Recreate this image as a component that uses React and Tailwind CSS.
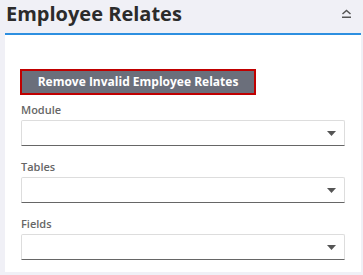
export default function App() {
  const Field = ({ label }) => (
    <div className="flex flex-col">
      <div className="text-[11px] font-semibold text-[#666] leading-[14px] mb-[3px]">{label}</div>
      <div className="h-[26px] border border-[#ddd] border-b-[#666] rounded-t-[2px] bg-white flex items-center justify-end pr-[8px]">
        <svg width="9" height="5" viewBox="0 0 9 5"><path d="M0 0h9L4.5 5z" fill="#555" /></svg>
      </div>
    </div>
  );
  return (
    <div className="w-[363px] h-[275px] bg-[#f0f0f6] overflow-hidden" style={{ fontFamily: '"Open Sans", sans-serif' }}>
      <div className="h-[33px] flex items-center justify-between pl-[6px] pr-[11px]">
        <div className="text-[20px] font-bold text-[#2b2b2b] leading-none -mt-[6px]">Employee Relates</div>
        <svg width="11" height="10" viewBox="0 0 11 10" className="-mt-[6px]">
          <path d="M1.5 5L5.5 1.5L9.5 5" stroke="#555" strokeWidth="1.5" fill="none" />
          <rect x="1" y="7.5" width="9" height="1.5" fill="#555" />
        </svg>
      </div>
      <div className="ml-[5px] mr-[2px] h-[239px] bg-white border-t-2 border-[#2d8fe0] px-4 pt-[34px]">
        <button className="w-[236px] h-[26px] bg-[#6b6f7b] border-2 border-[#c00000] text-white text-[12px] font-bold leading-none flex items-center justify-center -ml-px">
          Remove Invalid Employee Relates
        </button>
        <div className="mt-[8px] flex flex-col gap-[14px]">
          <Field label="Module" />
          <Field label="Tables" />
          <Field label="Fields" />
        </div>
      </div>
    </div>
  );
}
